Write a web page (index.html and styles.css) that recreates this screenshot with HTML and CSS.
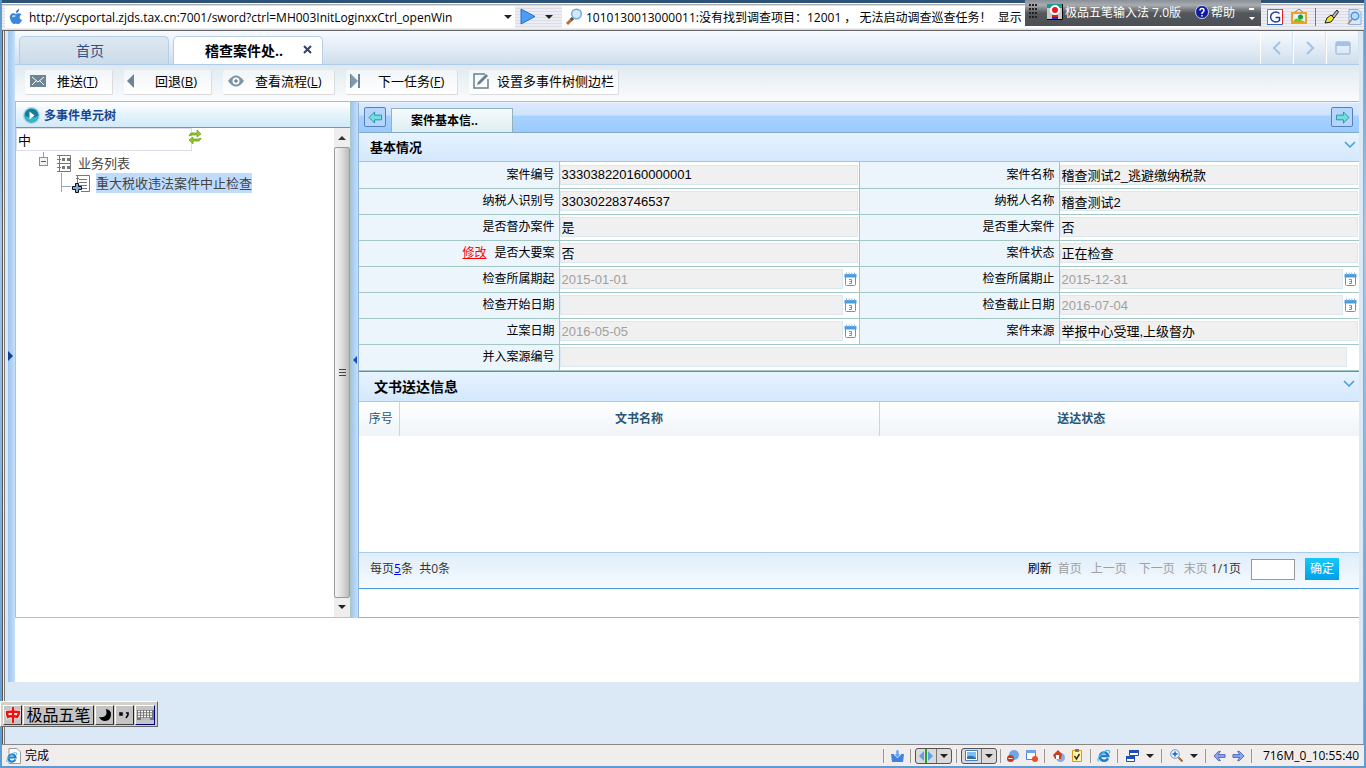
FILE: index.html
```html
<!DOCTYPE html>
<html lang="zh-CN">
<head>
<meta charset="utf-8">
<title>稽查案件处理</title>
<link rel="stylesheet" href="styles.css">
</head>
<body>
<svg class="defs" aria-hidden="true">
  <symbol id="cal" viewBox="0 0 13 15">
    <path d="M1.500 3v9.500q0 1 1 1h8q1 0 1-1V3z" fill="#fff" stroke="#4a9de0"/>
    <path d="M.5 2h12v3.500H.5z" fill="#4a9de0"/>
    <path d="M2.500 .5v2.500M5.200 .5v2.500M7.800 .5v2.500M10.500 .5v2.500" stroke="#7fbcec"/>
    <path d="M5 7.500h2.500v4H5M5.500 9.500h2" fill="none" stroke="#4a9de0"/>
  </symbol>
  <symbol id="chev" viewBox="0 0 12 8"><path d="M1 1l5 5 5-5" fill="none" stroke="#3f9be0" stroke-width="1.500"/></symbol>
  <symbol id="caret" viewBox="0 0 8 4"><path d="M0 0h8L4 4z" fill="#222"/></symbol>
  <symbol id="ie" viewBox="0 0 16 16">
    <path d="M12.500 10.500A4.800 4.800 0 1 1 12.800 8H4" fill="none" stroke="#1c7fd0" stroke-width="2.800"/>
    <path d="M2 14Q-1 12 5 6T14 2q1 1 0 3" fill="none" stroke="#4fb4ee" stroke-width="1.300"/>
  </symbol>
  <symbol id="arrow" viewBox="0 0 16 14"><path d="M1 7l6-6v3.500h7.500v5H7V13z" fill="#6fe0e0" stroke="#2e8ba0"/></symbol>
  <symbol id="nav" viewBox="0 0 14 12"><path d="M1 6l5-5h2L5.500 4.500H13v3H5.500L8 11H6z" fill="#8fa6ea" stroke="#4a66c0"/></symbol>
</svg>

<div class="window">
  <header class="chrome">
    <form class="address">
      <svg width="14" height="16" viewBox="0 0 14 16"><path d="M7 5C4 3 0 5 1 9.500 2 14 4.500 16 7 14.500 10 16 12 14 13 11 10 10 10 7 12.500 5.500 11 4 9 4 7 5z" fill="#3a86dc"/><path d="M7 4Q7 1 10 0q0 3-3 4z" fill="#2763b8"/><path d="M3 7q2-2 4 0-2 2-4 1z" fill="#a5d0f7"/></svg>
      <input class="url" aria-label="地址" value="http://yscportal.zjds.tax.cn:7001/sword?ctrl=MH003InitLoginxxCtrl_openWin">
      <svg width="8" height="4"><use href="#caret"/></svg>
    </form>
    <div class="go">
      <button type="button" aria-label="转到"><svg width="16" height="17" viewBox="0 0 16 17"><path d="M1 1l14 7.500L1 16z" fill="#4b9cf5" stroke="#2a6cc8"/></svg></button>
      <button type="button" aria-label="转到选项"><svg width="8" height="4"><use href="#caret"/></svg></button>
    </div>
    <div class="search">
      <svg width="18" height="18" viewBox="0 0 18 18"><path d="M2 16l6-6" stroke="#b8703a" stroke-width="3"/><path d="M6 12l2-2" stroke="#555" stroke-width="3"/><circle cx="11.500" cy="6" r="4.800" fill="#cfe8fb" stroke="#78a8d4" stroke-width="1.500"/></svg>
      <input aria-label="搜索" value="1010130013000011:没有找到调查项目：12001 ， 无法启动调查巡查任务！  显示">
    </div>
    <div class="tools">
      <svg width="16" height="16" viewBox="0 0 16 16"><path fill="#fff" d="M0 0h16v16H0z"/><path d="M.5 16V.5H16" fill="none" stroke="#2fa84a"/><path d="M0 15.500h15.500V0" fill="none" stroke="#2c5fc0"/><path d="M15.500 1v14" stroke="#e02020"/><path d="M12.500 4.500A5.200 5 0 1 0 12.500 11.500V8.500H8.500" fill="none" stroke="#1c3f9a" stroke-width="1.500"/></svg>
      <svg width="16" height="15" viewBox="0 0 16 15"><path d="M3 4l5-4 5 4" fill="none" stroke="#777"/><path d="M1 4h14v10H1z" fill="#dff2fb" stroke="#eda21f" stroke-width="2"/><path d="M2 13q2-5 6-3t6 3z" fill="#7ac62a"/><circle cx="9.500" cy="8" r="2.500" fill="#25992c"/></svg>
      <i class="bar"></i>
      <svg width="15" height="15" viewBox="0 0 15 15"><path d="M8 7l5-6 1.500 2L10 9z" fill="#bbb" stroke="#222"/><path d="M1 14l2-5 4-3 3 3-3 4z" fill="#f2e21c" stroke="#222"/></svg>
      <svg width="15" height="16" viewBox="0 0 15 16"><path d="M2 .5h9l3 3v12H2z" fill="#d8e8fa" stroke="#8db0de"/><path d="M1 15l4-5" stroke="#b09070" stroke-width="2"/><circle cx="8" cy="7" r="3.800" fill="#b5dbf8" stroke="#5a93d2" stroke-width="1.500"/></svg>
    </div>
  </header>

  <div class="client">
    <div class="stage">
      <button class="stripe" type="button" aria-label="展开侧栏"><svg width="5" height="10" viewBox="0 0 5 10"><path d="M0 0l5 5-5 5z" fill="#12408f"/></svg></button>
      <div class="portal">
        <nav class="tabs">
          <a class="tab" href="#home">首页</a>
          <a class="tab current" href="#case">稽查案件处..<svg width="9" height="9" viewBox="0 0 9 9"><path d="M1 1l7 7M8 1L1 8" stroke="#2f4368" stroke-width="2"/></svg></a>
          <div class="tabctl">
            <button type="button" aria-label="上一个"><svg width="10" height="14" viewBox="0 0 10 14"><path d="M8 1L2 7l6 6" fill="none" stroke="#a3c3e6" stroke-width="2"/></svg></button>
            <button type="button" aria-label="下一个"><svg width="10" height="14" viewBox="0 0 10 14"><path d="M2 1l6 6-6 6" fill="none" stroke="#a3c3e6" stroke-width="2"/></svg></button>
            <button type="button" aria-label="窗口"><svg width="16" height="14" viewBox="0 0 16 14"><rect x="1" y="1" width="14" height="12" rx="1.500" fill="none" stroke="#a3c3e6" stroke-width="1.500"/><path d="M1 1h14v4H1z" fill="#a3c3e6"/></svg></button>
          </div>
        </nav>

        <div class="toolbar">
          <button type="button"><svg width="16" height="12" viewBox="0 0 16 12"><path d="M0 0h16v12H0z" fill="#6f8596"/><path d="M2 2l6 5 6-5M2 10l4-4M14 10l-4-4" fill="none" stroke="#fff"/></svg><span>推送(<u>T</u>)</span></button>
          <button type="button" class="back"><svg width="8" height="14" viewBox="0 0 8 14"><path d="M7 0v14L0 7z" fill="#6b8497"/></svg><span>回退(<u>B</u>)</span></button>
          <button type="button" class="view"><svg width="16" height="12" viewBox="0 0 16 12"><path d="M0 6Q8-5 16 6 8 17 0 6z" fill="#7e95a6"/><circle cx="8" cy="6" r="3.500" fill="#fff"/><circle cx="8" cy="6" r="1.800" fill="#6b8497"/></svg><span>查看流程(<u>L</u>)</span></button>
          <button type="button" class="next"><svg width="11" height="14" viewBox="0 0 11 14"><path d="M1 0v14l7-7z" fill="#8299aa"/><path d="M0 0h1v14H0zM8 0h2v14H8z" fill="#6b8497"/></svg><span>下一任务(<u>F</u>)</span></button>
          <button type="button" class="set"><svg width="17" height="16" viewBox="0 0 17 16"><path d="M12 1H1v14h14V6" fill="none" stroke="#6b7f90" stroke-width="1.500"/><path d="M4 12l1-3 8-8 2 2-8 8z" fill="#6b7f90"/></svg><span>设置多事件树侧边栏</span></button>
        </div>

        <div class="main">
          <aside class="tree">
            <h2><svg width="17" height="17" viewBox="0 0 17 17"><circle cx="8.500" cy="8.500" r="8.500" fill="#a9d6e4"/><circle cx="8.500" cy="8.500" r="7" fill="#127f9f"/><path d="M2 9a6.500 6.500 0 0 0 13 0q-6 3-13 0z" fill="#35b8cf"/><path d="M6.500 4.500l5 4-5 4z" fill="#fff"/></svg>多事件单元树</h2>
            <div class="treebody">
              <div class="nodes">
                <div class="filter"><input aria-label="过滤" value="中"><button type="button" aria-label="刷新"><svg width="14" height="14" viewBox="0 0 14 14"><path d="M1 6q1-4 5-3h3V0l4 4-4 3V5H5Q3 5 1 6zM13 8q-1 4-5 3H5v3l-4-4 4-3v2h4q2 0 4-1z" fill="#8fca1e" stroke="#5a8f10" stroke-width=".6"/></svg></button></div>
                <ul>
                  <li><svg width="36" height="21" viewBox="0 0 36 21"><path d="M4.500 0v5" stroke="#8fa8c0"/><rect x=".5" y="5.500" width="8" height="8" fill="#f4f4f4" stroke="#909090"/><path d="M2 9.500h5" stroke="#3a62a0"/><path d="M20.500 3.500h11v16h-11z" fill="#fff" stroke="#777"/><path d="M18 3.500h4M18 7.500h4M18 11.500h4M18 15.500h4M18 19.500h4" stroke="#777"/><path d="M23 6h3v3h-3zM28 6h3v3h-3zM23 14h3v3h-3zM28 14h3v3h-3zM21 11h10v1H21z" fill="#777"/></svg><span>业务列表</span></li>
                  <li class="leaf"><svg width="36" height="20" viewBox="0 0 36 20"><path d="M1.500 0v19M1 13.500h10" stroke="#8fa8c8"/><path d="M16 2.500h13.500v16H21M19 6.500h8M19 9.500h8M19 12.500h8M22 15.500h5M17.500 2v8M16 5.500h3" fill="none" stroke="#777"/><path d="M15.500 10.500h3v3h3v3h-3v3h-3v-3h-3v-3h3z" fill="#7fa9d8" stroke="#111"/></svg><a href="#task">重大税收违法案件中止检查</a></li>
                </ul>
              </div>
              <div class="scroll"><i><svg width="8" height="4" viewBox="0 0 8 4"><path d="M0 4h8L4 0z" fill="#333"/></svg></i><b><svg width="7" height="9" viewBox="0 0 7 9"><path d="M0 1.500h7M0 4.500h7M0 7.500h7" stroke="#444"/></svg></b><i><svg width="8" height="4"><use href="#caret"/></svg></i></div>
            </div>
          </aside>
          <button class="split" type="button" aria-label="收起"><svg width="4" height="8" viewBox="0 0 4 8"><path d="M4 0v8L0 4z" fill="#1550b8"/></svg></button>

          <section class="detail">
            <div class="subtabs">
              <button type="button" aria-label="向左"><svg width="15" height="13"><use href="#arrow"/></svg></button>
              <a href="#basic">案件基本信..</a>
              <button type="button" class="right" aria-label="向右"><svg width="15" height="13" viewBox="0 0 16 14"><path d="M15 7L9 1v3.500H1.500v5H9V13z" fill="#6fe0e0" stroke="#2e8ba0"/></svg></button>
            </div>
            <h3>基本情况<svg width="12" height="8"><use href="#chev"/></svg></h3>
            <table class="form">
              <colgroup><col class="name"><col><col class="name"><col></colgroup>
              <tr><th><label for="f1">案件编号</label></th><td><input id="f1" readonly value="333038220160000001"></td><th><label for="f2">案件名称</label></th><td><input id="f2" readonly value="稽查测试2_逃避缴纳税款"></td></tr>
              <tr><th><label for="f3">纳税人识别号</label></th><td><input id="f3" readonly value="330302283746537"></td><th><label for="f4">纳税人名称</label></th><td><input id="f4" readonly value="稽查测试2"></td></tr>
              <tr><th><label for="f5">是否督办案件</label></th><td><input id="f5" class="pick" readonly value="是"></td><th><label for="f6">是否重大案件</label></th><td><input id="f6" class="pick" readonly value="否"></td></tr>
              <tr><th><a href="#edit">修改</a><label for="f7">是否大要案</label></th><td><input id="f7" class="pick" readonly value="否"></td><th><label for="f8">案件状态</label></th><td><input id="f8" class="pick" readonly value="正在检查"></td></tr>
              <tr><th><label for="f9">检查所属期起</label></th><td><div class="date"><input id="f9" disabled value="2015-01-01"><svg width="13" height="15"><use href="#cal"/></svg></div></td><th><label for="f10">检查所属期止</label></th><td><div class="date"><input id="f10" disabled value="2015-12-31"><svg width="13" height="15"><use href="#cal"/></svg></div></td></tr>
              <tr><th><label for="f11">检查开始日期</label></th><td><div class="date"><input id="f11" disabled value=""><svg width="13" height="15"><use href="#cal"/></svg></div></td><th><label for="f12">检查截止日期</label></th><td><div class="date"><input id="f12" disabled value="2016-07-04"><svg width="13" height="15"><use href="#cal"/></svg></div></td></tr>
              <tr><th><label for="f13">立案日期</label></th><td><div class="date"><input id="f13" disabled value="2016-05-05"><svg width="13" height="15"><use href="#cal"/></svg></div></td><th><label for="f14">案件来源</label></th><td><input id="f14" class="pick" readonly value="举报中心受理,上级督办"></td></tr>
              <tr><th><label for="f15">并入案源编号</label></th><td colspan="3" class="wide"><input id="f15" readonly value=""></td></tr>
            </table>
            <div class="delivery">
              <h3 class="second">文书送达信息<svg width="12" height="8"><use href="#chev"/></svg></h3>
              <table class="list"><thead><tr><th class="no">序号</th><th>文书名称</th><th class="state">送达状态</th></tr></thead></table>
              <div class="empty"></div>
              <div class="pager">
                <span class="count">每页<a href="#size">5</a>条&nbsp; 共0条</span>
                <button type="button">刷新</button>
                <button type="button" disabled>首页</button>
                <button type="button" disabled class="prev">上一页</button>
                <button type="button" disabled class="nextp">下一页</button>
                <button type="button" disabled class="last">末页</button>
                <span>1/1页</span>
                <input aria-label="页码">
                <button type="button" class="ok">确定</button>
              </div>
            </div>
          </section>
        </div>
      </div>
    </div>
  </div>

  <footer class="status">
    <div class="done"><svg width="15" height="16" viewBox="0 0 15 16"><path d="M3 .5h8l3.500 3.500v11.500H3z" fill="#fff" stroke="#999"/><svg width="12" height="13" y="3" viewBox="0 0 16 16"><use href="#ie"/></svg></svg>完成</div>
    <div class="cell w27"><svg width="13" height="12" viewBox="0 0 13 12"><path d="M0 4h3l1 2h5l1-2h3l-1 8H1z" fill="#3f83e0"/><path d="M5 0h3v4h2L6.500 8 3 4h2z" fill="#6aa4f0" stroke="#fff" stroke-width=".5"/></svg></div>
    <div class="cell w46"><div class="toggle"><svg width="14" height="14" viewBox="0 0 14 14"><path d="M5 2v10L0 7zM9 2v10l5-5z" fill="#5c9df0"/><path d="M6 0h2v14H6z" fill="#2ba02b"/></svg><i></i><svg width="8" height="4"><use href="#caret"/></svg></div></div>
    <div class="cell w44"><div class="toggle"><svg width="13" height="11" viewBox="0 0 13 11"><path d="M.5.5h12v10H.5z" fill="#fff" stroke="#4a7fc0"/><path d="M2 2h9v7H2z" fill="#7ec0f4"/><path d="M2 9V7q4-3 9 1v1z" fill="#2f6fae"/></svg><i></i><svg width="8" height="4"><use href="#caret"/></svg></div></div>
    <div class="cell w44"><svg width="12" height="12" viewBox="0 0 12 12"><circle cx="7" cy="5" r="5" fill="#6da5ea"/><circle cx="3.500" cy="8.500" r="3.500" fill="#c23a1c"/><path d="M1.500 8.500h4" stroke="#fff"/></svg><svg width="12" height="12" viewBox="0 0 12 12"><path d="M.5.5h9v9h-9z" fill="#fff" stroke="#4a82da"/><path d="M0 0h10v3H0z" fill="#6ea0ec"/><circle cx="9" cy="9" r="3" fill="#e6502a"/></svg></div>
    <div class="cell w46"><svg width="12" height="12" viewBox="0 0 12 12"><circle cx="7.500" cy="7.500" r="4.500" fill="#84aee8"/><path d="M0 5l5-5 4 4-1 5-6 0z" fill="#c94321"/><path d="M3 5h3v4H3z" fill="#fff"/></svg><svg width="10" height="13" viewBox="0 0 10 13"><path d="M.5 1.500h9v11h-9z" fill="#fff6a8" stroke="#d99a1c"/><path d="M3 0h4v3H3z" fill="#777"/><path d="M2.500 7l2 3 3-5" fill="none" stroke="#333" stroke-width="1.500"/></svg></div>
    <div class="cell w27"><svg width="14" height="14"><use href="#ie"/></svg></div>
    <div class="cell w44"><svg width="13" height="12" viewBox="0 0 13 12"><path d="M3.500.5h9v5h-9zM.5 6.500h8v5h-8z" fill="#fff" stroke="#1e4fb8"/><path d="M3 0h10v3H3zM0 6h9v3H0z" fill="#1e4fb8"/></svg><svg width="8" height="4"><use href="#caret"/></svg></div>
    <div class="cell w44"><svg width="13" height="13" viewBox="0 0 13 13"><circle cx="5" cy="5" r="4.300" fill="#eaf5ff" stroke="#6a98cc"/><path d="M5 2.500v5M2.500 5h5" stroke="#1f5fc0" stroke-width="1.500"/><path d="M8.500 8.500l4 4" stroke="#9a6a3a" stroke-width="2"/></svg><svg width="8" height="4"><use href="#caret"/></svg></div>
    <div class="cell w46 tight"><svg width="13" height="12"><use href="#nav"/></svg><svg width="13" height="12" viewBox="0 0 14 12"><path d="M13 6L8 1H6l2.500 3.500H1v3h7.500L6 11h2z" fill="#8fa6ea" stroke="#4a66c0"/></svg></div>
    <div class="cell clock">716M_0_10:55:40</div>
  </footer>

  <div class="imetop">
    <svg class="dots" width="9" height="17" viewBox="0 0 9 17"><path d="M0 1h9M0 5h9M0 9h9M0 13h9" stroke="#222" stroke-width="2" stroke-dasharray="2 1"/></svg>
    <svg width="16" height="16" viewBox="0 0 16 16"><path d="M0 0h16v16H0z" fill="#c8c8c8"/><path d="M0 0h16v4H0z" fill="#1a9a8a"/><circle cx="8" cy="6" r="5" fill="#fff"/><circle cx="8" cy="6" r="3" fill="#f01818"/><path d="M5 12h6v3H5z" fill="#1c2fd0"/><path d="M5 11h6v2H5z" fill="#e01818"/><path d="M0 15.500h15.500V0" stroke="#000" fill="none"/></svg>
    <span>极品五笔输入法 7.0版</span>
    <svg class="help" width="14" height="14" viewBox="0 0 14 14"><circle cx="7" cy="7" r="6.500" fill="#0c1ca0" stroke="#c8cce8"/><path d="M5 5.500Q5 3.500 7 3.500t2 2Q9 6.500 7 8v1M7 10v1.500" fill="none" stroke="#fff" stroke-width="1.500"/></svg>
    <span>帮助</span>
    <svg class="more" width="6" height="13" viewBox="0 0 6 13"><path d="M0 0h5v2H0zM0 9h6L3 12z" fill="#fff"/></svg>
  </div>

  <div class="imebar">
    <button type="button" aria-label="中文"><svg width="16" height="16" viewBox="0 0 16 16"><path d="M2 5q6-1 12 0 0 3-2 5-5-2-9 0-1-2-1-5zM8 0v16" fill="none" stroke="#fff" stroke-width="4"/><path d="M2 5q6-1 12 0 0 3-2 5-5-2-9 0-1-2-1-5zM8 0v16" fill="none" stroke="#f01010" stroke-width="2.500"/></svg></button>
    <button type="button" class="wubi">极品五笔</button>
    <button type="button" aria-label="半角"><svg width="12" height="12" viewBox="0 0 12 12"><path d="M7 0q5 1 5 5 0 7-6 7-4 0-6-4 5 1 7-2 1-2 0-6z" fill="#000"/></svg></button>
    <button type="button" aria-label="标点"><svg width="11" height="7" viewBox="0 0 11 7"><path d="M1 1h2v2H1zM7 1h2v2l-2 3" fill="none" stroke="#000" stroke-width="1.500"/></svg></button>
    <button type="button" class="kbd" aria-label="软键盘"><svg width="17" height="10" viewBox="0 0 17 10"><path d="M0 0h17v10H0z" fill="#777"/><path d="M1 1.500h15M1 4h15M1 6.500h15" stroke="#fff" stroke-width="1.500" stroke-dasharray="2 1"/><path d="M4 9h9" stroke="#fff"/></svg></button>
  </div>
</div>
</body>
</html>
```

FILE: styles.css
```css
* { box-sizing: border-box; }
body {
  margin: 0;
  font: 12px/18px "Open Sans", "Noto Sans CJK SC", sans-serif;
  color: #000;
}
button, input { font: inherit; color: inherit; margin: 0; padding: 0; border: 0; background: none; border-radius: 0; }
svg { display: block; flex: none; }
h2, h3, ul { margin: 0; padding: 0; }
table { border-collapse: collapse; table-layout: fixed; width: 100%; }
.defs { position: absolute; width: 0; height: 0; }

.window {
  position: relative;
  display: flex;
  flex-direction: column;
  min-height: 100vh;
  padding: 0 2px 2px;
  background: linear-gradient(#5d98cb, #a9c9e6 30%, #5f9bd0);
}

/* browser address bar */
.chrome {
  display: flex;
  height: 31px;
  border-top: 3px solid #2e5378;
  border-bottom: 1px solid #666;
  background: repeating-linear-gradient(#ededf4 0 2px, #dcdce6 2px 3px);
  box-shadow: inset 0 1px #fff, inset 0 2px #aaa;
}
.address, .search { display: flex; align-items: center; gap: 6px; margin: 3px 0 2px; background: #fff; }
.address { width: 510px; padding: 0 3px 0 4px; margin-left: 3px; }
.address input, .search input { flex: 1; min-width: 0; height: 20px; outline: 0; }
.go { display: flex; align-items: center; gap: 9px; width: 47px; padding-left: 5px; }
.search { flex: 1; padding-left: 3px; gap: 3px; }
.search input { white-space: pre; }
.tools { display: flex; align-items: center; gap: 8px; width: 105px; padding-left: 8px; }
.tools .bar { width: 1px; height: 18px; background: #777; }

.client {
  flex: 1;
  border-left: 1px solid #555;
  border-right: 1px solid #9ab;
  background: #dbe9f6;
  padding: 0 4px 0 5px;
  box-shadow: inset 1px 0 #eee, inset 2px 0 #777;
}
.stage { display: flex; background: #fff; }
.stripe {
  width: 7px;
  background: linear-gradient(90deg, #9cc3ee, #c5dff8);
  display: flex;
  align-items: center;
}
.portal { flex: 1; min-width: 0; padding-bottom: 64px; }

.tabs {
  display: flex;
  align-items: flex-end;
  gap: 4px;
  height: 34px;
  padding-left: 4px;
  border-bottom: 1px solid #aecbea;
  background: linear-gradient(#f7fbfe, #cfdeed);
}
.tab {
  display: flex;
  align-items: center;
  justify-content: center;
  width: 150px;
  height: 28px;
  padding-right: 8px;
  border: 1px solid #b7cce6;
  border-bottom: 0;
  border-radius: 5px 5px 0 0;
  background: linear-gradient(#dde8f1, #cadbe9);
  color: #335080;
  font-size: 14px;
  text-decoration: none;
}
.tab.current { gap: 20px; padding: 0 0 0 21px; background: #fff; color: #000; font-weight: bold; }
.tab.current svg { margin-bottom: 2px; }
.tabctl { display: flex; align-self: stretch; margin-left: auto; }
.tabctl button { display: flex; align-items: center; justify-content: center; width: 33px; border-left: 1px solid #fff; border-right: 1px solid #d5e3f1; }

.toolbar {
  display: flex;
  gap: 11px;
  height: 37px;
  padding: 5px 10px 6px;
  background: linear-gradient(#dfe9f0, #fbfcfd);
  border-bottom: 1px solid #9ec0c8;
}
.toolbar button {
  display: flex;
  align-items: center;
  gap: 11px;
  min-width: 88px;
  padding: 0 5px 2px;
  border-right: 1px solid #dcdcdc;
  border-bottom: 1px solid #dcdcdc;
  border-radius: 2px;
  background: linear-gradient(#f1f5f8, #fff);
  font-size: 13px;
}
.toolbar .view, .toolbar .next { min-width: 112px; }
.toolbar .back { gap: 20px; padding-left: 3px; }
.toolbar .next { gap: 17px; padding-left: 4px; }
.toolbar .set { gap: 7px; min-width: 150px; padding: 0 4px 2px; }

.main { display: flex; }

/* left tree */
.tree { display: flex; flex-direction: column; width: 336px; border: 1px solid #a5cbc8; border-top: 0; }
.tree h2 {
  display: flex;
  align-items: center;
  gap: 4px;
  height: 26px;
  padding: 2px 0 0 7px;
  border-bottom: 1px solid #5f9ac8;
  background: linear-gradient(#fff, #e4f3fb 50%, #d2eaf8);
  color: #1a4590;
  font-size: 12px;
}
.treebody { display: flex; flex: 1; }
.nodes { flex: 1; color: #444; font-size: 13px; }
.filter { display: flex; align-items: flex-start; }
.filter input { width: 176px; height: 23px; padding-left: 1px; border: 1px solid #dde; color: #000; outline: 0; }
.filter button { margin: 2px 0 0 -4px; }
.nodes ul { list-style: none; padding: 1px 0 0 23px; }
.nodes li { display: flex; gap: 3px; height: 21px; align-items: center; }
.nodes .leaf { padding-left: 21px; height: 20px; gap: 0; }
.nodes .leaf a { height: 20px; line-height: 20px; background: #c0dcfc; color: #444; text-decoration: none; }
.scroll { display: flex; flex-direction: column; width: 16px; background: #eee; }
.scroll i { display: flex; align-items: center; justify-content: center; height: 19px; }
.scroll b {
  display: flex;
  flex: 1;
  align-items: center;
  justify-content: center;
  border: 1px solid #999;
  border-radius: 2px;
  background: linear-gradient(90deg, #f5f5f5, #ddd 50%, #bbb);
}
.split { display: flex; align-items: center; justify-content: center; width: 7px; background: linear-gradient(90deg, #9fc5ec, #c5dff8); }

/* right side */
.detail { flex: 1; min-width: 0; border: 1px solid #8fb4dc; border-top-color: #eef6ff; border-right: 0; }
.subtabs {
  display: flex;
  align-items: flex-end;
  gap: 5px;
  height: 30px;
  padding: 0 6px 0 5px;
  border-bottom: 1px solid #83a9c4;
  background: linear-gradient(#dbe9fe, #cfe3fd 12px, #a8d1ff 13px, #9acbff);
}
.subtabs button {
  display: flex;
  align-items: center;
  justify-content: center;
  width: 22px;
  height: 20px;
  margin-bottom: 5px;
  border: 1px solid #5580b8;
  border-radius: 2px;
  background: #b4d6fb;
}
.subtabs .right { margin-left: auto; }
.subtabs a {
  width: 122px;
  height: 24px;
  padding-left: 19px;
  line-height: 23px;
  border: 1px solid #93b3b8;
  border-bottom: 0;
  background: linear-gradient(#f6fbfc, #ddeef0);
  color: #000;
  font-weight: bold;
  text-decoration: none;
}
.detail h3 {
  display: flex;
  justify-content: space-between;
  height: 29px;
  padding: 0 3px 0 11px;
  border-bottom: 1px solid #a8c4dc;
  background: linear-gradient(#e7f3ff, #d3e8fd);
  font-size: 13px;
  line-height: 28px;
}
.detail h3 svg { margin-top: 8px; }
.detail .second { height: 30px; padding: 0 4px 0 15px; border-bottom-color: #a9cbe8; font-size: 14px; line-height: 30px; }

.form th, .form td { height: 26px; padding: 0; border: 1px solid #a3c8c4; border-top: 0; }
.form tr > :first-child { border-left: 0; }
.form tr > :last-child { border-right: 0; }
.form .name { width: 20%; }
.form th { padding-right: 4px; background: #edf5fc; font-weight: normal; text-align: right; }
.form th a { margin-right: 8px; color: #f00; }
.form input {
  display: block;
  width: 100%;
  height: 20px;
  padding: 0 1px;
  border: 1px solid #dbe8f0;
  background: #f0f0f0;
  font: 13px/18px "Liberation Sans", "Noto Sans CJK SC", sans-serif;
}
.form .pick { padding-bottom: 2px; }
.form td { padding-right: 1px; }
.form .wide { padding-right: 12px; }
.form .date { display: flex; align-items: center; gap: 1px; padding-right: 1px; }
.form .date input { flex: 1; min-width: 0; color: #a0a0a0; }

.delivery { border-top: 1px solid #4a94d6; border-bottom: 1px solid #4a9ade; margin-bottom: 28px; }
.list th { height: 34px; padding: 0; border-left: 1px solid #c5d8dc; background: linear-gradient(#fff, #eff4f8); color: #2a5674; font-weight: 600; }
.list .no { width: 40px; padding-left: 4px; border-left: 0; font-weight: normal; }
.list .state { padding-right: 76px; }
.empty { height: 116px; }
.pager {
  display: flex;
  align-items: center;
  height: 36px;
  padding: 0 20px 2px 11px;
  border-top: 1px solid #a9cbe8;
  background: linear-gradient(#e0edf9, #f5faff);
  color: #333;
}
.pager .count { margin-right: auto; }
.pager .count a { color: #00f; }
.pager button { margin-right: 6px; color: #000; }
.pager button:disabled { color: #a0a0a0; }
.pager .prev, .pager .nextp { margin: 0 9px 0 3px; }
.pager .last { margin-right: 3px; }
.pager input { width: 44px; height: 21px; margin: 0 10px; border: 1px solid #999; background: #fff; }
.pager .ok { width: 34px; height: 22px; margin: 0; background: linear-gradient(#18c8f8, #00a0e8); color: #fff; }

/* status bar */
.status {
  display: flex;
  align-items: center;
  height: 22px;
  border-top: 1px solid #888;
  background: #f0edec;
}
.done { display: flex; align-items: center; gap: 4px; flex: 1; padding-left: 4px; }
.cell { display: flex; align-items: center; justify-content: center; gap: 7px; height: 14px; border-left: 1px solid #999; }
.w27 { width: 27px; }
.w44 { width: 44px; }
.w46 { width: 46px; }
.tight { gap: 6px; }
.clock { width: 113px; padding-left: 6px; }
.toggle { display: flex; align-items: center; gap: 3px; height: 16px; padding: 0 3px; border: 1px solid #555; border-radius: 3px; background: #dcdad8; }
.toggle i { width: 1px; height: 14px; background: #777; }

/* floating input method bars */
.imetop {
  position: absolute;
  top: 0;
  right: 105px;
  display: flex;
  align-items: flex-start;
  width: 236px;
  height: 26px;
  padding: 4px 6px 0 4px;
  background: linear-gradient(#8a9098, #a8acb0 20%, #54585c 50%, #4b4f53);
  color: #fff;
}
.imetop span { margin-left: 2px; }
.imetop .dots { margin-right: 9px; }
.imetop .help { margin: 1px 0 0 auto; }
.imetop .more { margin: 4px 0 0 14px; }
.imebar {
  position: absolute;
  left: 0;
  bottom: 41px;
  display: flex;
  gap: 1px;
  height: 26px;
  padding: 3px 2px;
  border: 1px solid #fff;
  border-right: 1px solid #666;
  border-bottom: 1px solid #666;
  background: #d4d0c8;
}
.imebar button { display: flex; align-items: center; justify-content: center; width: 19px; height: 20px; border: 1px solid #fff; border-right-color: #222; border-bottom-color: #444; background: #c4c4c4; }
.imebar .wubi { width: 71px; font-size: 16px; }
.imebar .kbd { width: 20px; border-right-color: #008; border-bottom-color: #008; }
```
